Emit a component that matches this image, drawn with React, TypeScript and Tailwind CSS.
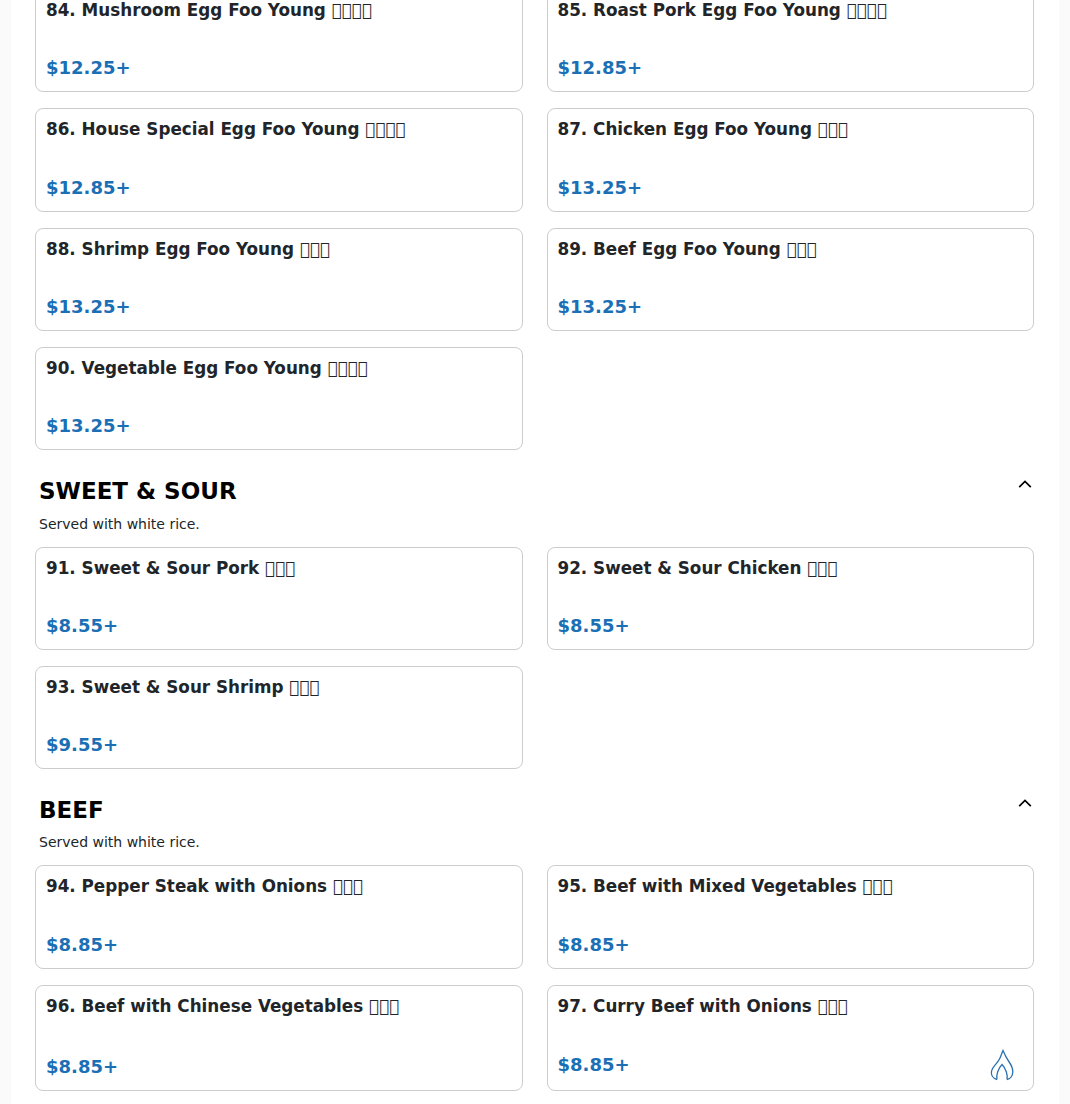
import React from "react";

type Item = { name: string; boxes: number; price: string; spicy?: boolean };

const topItems: Item[] = [
  { name: "84. Mushroom Egg Foo Young", boxes: 4, price: "$12.25+" },
  { name: "85. Roast Pork Egg Foo Young", boxes: 4, price: "$12.85+" },
  { name: "86. House Special Egg Foo Young", boxes: 4, price: "$12.85+" },
  { name: "87. Chicken Egg Foo Young", boxes: 3, price: "$13.25+" },
  { name: "88. Shrimp Egg Foo Young", boxes: 3, price: "$13.25+" },
  { name: "89. Beef Egg Foo Young", boxes: 3, price: "$13.25+" },
  { name: "90. Vegetable Egg Foo Young", boxes: 4, price: "$13.25+" },
];

const sweetSour: Item[] = [
  { name: "91. Sweet & Sour Pork", boxes: 3, price: "$8.55+" },
  { name: "92. Sweet & Sour Chicken", boxes: 3, price: "$8.55+" },
  { name: "93. Sweet & Sour Shrimp", boxes: 3, price: "$9.55+" },
];

const beef: Item[] = [
  { name: "94. Pepper Steak with Onions", boxes: 3, price: "$8.85+" },
  { name: "95. Beef with Mixed Vegetables", boxes: 3, price: "$8.85+" },
  { name: "96. Beef with Chinese Vegetables", boxes: 3, price: "$8.85+" },
  { name: "97. Curry Beef with Onions", boxes: 3, price: "$8.85+", spicy: true },
];

const Flame = () => (
  <svg width="24" height="32" viewBox="0 0 24 32" fill="none" stroke="#2a70ad" strokeWidth="1.3" className="-my-px mr-[9px] shrink-0">
    <path d="M7 30.500 C3 29.500 1 26 1.500 22.500 C2.200 17.500 7 15 9.500 10 C11 7 11.800 4 13 1.500 C14.500 5 16 8.500 18.500 12 C21 15.500 23 19 22.800 23 C22.600 27 20 29.800 17 30.500" />
    <path d="M7 30.500 C6 26.500 8 19.500 12 15.500 C16 19.500 18 26.500 17 30.500" />
  </svg>
);

const Chevron = () => (
  <svg width="14" height="14" viewBox="0 0 14 14" fill="none" stroke="#000" strokeWidth="1.7" className="mt-[3px] mr-[-2px] shrink-0">
    <path d="M1.200 10.200 L7 4.500 L12.800 10.200" />
  </svg>
);

const Card = ({ item }: { item: Item }) => (
  <div className="flex flex-col justify-between rounded-lg border border-[#cccccc] bg-white px-[10px] pt-[8px] pb-[10px]">
    <h3 className="mb-[31px] text-[16.8px] leading-[25.2px] font-bold text-[#212529]">
      {item.name} <span className="font-normal">{"\uE000".repeat(item.boxes)}</span>
    </h3>
    <div className="flex items-center justify-between">
      <span className="text-[18px] leading-[27px] font-bold text-[#1a6fb5]">{item.price}</span>
      {item.spicy && <Flame />}
    </div>
  </div>
);

const Grid = ({ items }: { items: Item[] }) => (
  <div className="grid grid-cols-2 gap-x-6 gap-y-4">
    {items.map((item) => (
      <Card key={item.name} item={item} />
    ))}
  </div>
);

const Section = ({ title, items }: { title: string; items: Item[] }) => (
  <section className="mt-[24px]">
    <div className="flex justify-between px-1">
      <h2 className="text-[23px] leading-[34.5px] font-bold text-black">{title}</h2>
      <Chevron />
    </div>
    <p className="mt-[5px] mb-[12px] px-1 text-[14px] leading-[21px] text-[#212529]">Served with white rice.</p>
    <Grid items={items} />
  </section>
);

export default function App() {
  return (
    <div className="h-[1104px] overflow-hidden bg-[#fafafa] font-['DejaVu_Sans',sans-serif]">
      <div className="mx-[11px] -mt-[10.8px] bg-white pl-6 pr-[25px] pb-10">
        <Grid items={topItems} />
        <Section title="SWEET & SOUR" items={sweetSour} />
        <Section title="BEEF" items={beef} />
      </div>
    </div>
  );
}
